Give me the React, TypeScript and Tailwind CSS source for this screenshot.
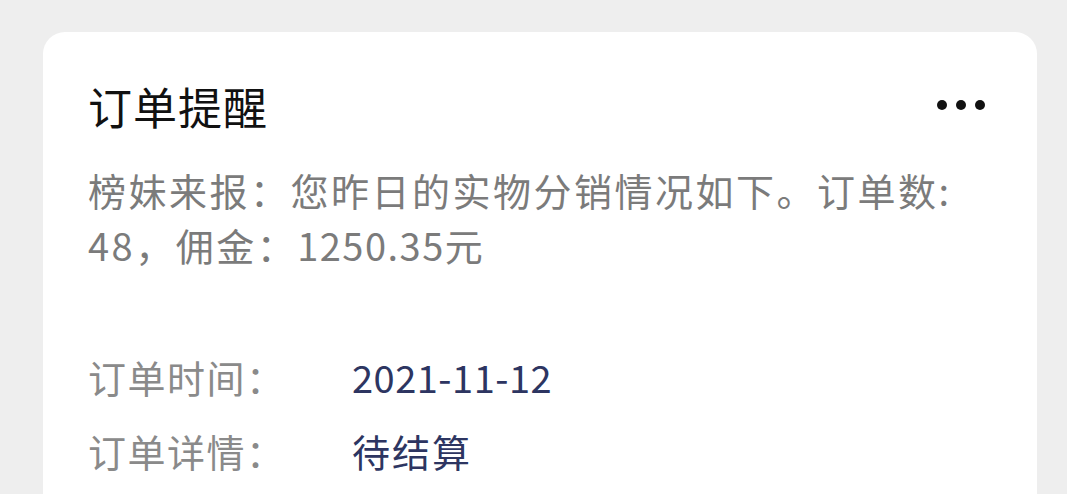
import React from "react";

export default function App() {
  const font = { fontFamily: '"Noto Sans CJK SC", "Noto Sans", sans-serif' };
  return (
    <div className="w-[1067px] h-[494px] overflow-hidden bg-[#eeeeee]" style={font}>
      <div className="ml-[43px] mr-[30px] mt-[32px] h-[600px] rounded-[22px] bg-white pl-[45px] pr-[50px] pt-[78px]">
        <div className="flex items-center justify-between h-[56px] -mt-[32px]">
          <div className="text-[44px] leading-[56px] text-[#111111] tracking-[1px]">订单提醒</div>
          <div className="flex items-center gap-[9px] mr-[2px] -mt-[2px]">
            <span className="block w-[10px] h-[10px] rounded-full bg-[#111111]" />
            <span className="block w-[10px] h-[10px] rounded-full bg-[#111111]" />
            <span className="block w-[10px] h-[10px] rounded-full bg-[#111111]" />
          </div>
        </div>
        <div className="mt-[28px] text-[38px] leading-[55px] text-[#7b7b7b] tracking-[2.5px]">
          榜妹来报：您昨日的实物分销情况如下。订单数:
          <br />
          48，佣金：<span className="tracking-[1.5px]">1250.35</span>元
        </div>
        <div className="mt-[68px] text-[38px] leading-[74px] tracking-[1.5px]">
          <div className="flex">
            <div className="w-[264px] text-[#8a8a8a]">订单时间：</div>
            <div className="text-[#2d3561] tracking-[0.5px]">2021-11-12</div>
          </div>
          <div className="flex">
            <div className="w-[264px] text-[#8a8a8a]">订单详情：</div>
            <div className="text-[#2d3561] tracking-[2px]">待结算</div>
          </div>
        </div>
      </div>
    </div>
  );
}
